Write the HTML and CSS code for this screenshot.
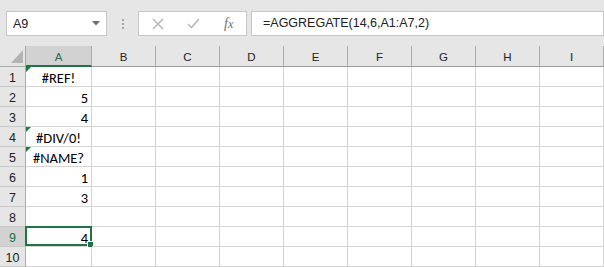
FILE: index.html
```html
<!DOCTYPE html>
<html>
<head>
<meta charset="utf-8">
<link rel="stylesheet" href="styles.css">
</head>
<body>
<div class="app">
  <div class="toolbar">
    <div class="namebox">
      <span class="name">A9</span>
      <svg class="caret" width="8" height="5" viewBox="0 0 8 5"><path d="M0 0H8L4 4.5Z" fill="#6b6b6b"/></svg>
    </div>
    <div class="grip"><i></i><i></i><i></i></div>
    <div class="buttons">
      <svg class="btn-x" width="12" height="12" viewBox="0 0 12 12"><path d="M1 1L11 11M11 1L1 11" stroke="#b9b9b9" stroke-width="1.6" fill="none"/></svg>
      <svg class="btn-ok" width="13" height="11" viewBox="0 0 13 11"><path d="M1 6L4.5 9.5L12 1" stroke="#b9b9b9" stroke-width="1.6" fill="none"/></svg>
      <span class="fx">f<span class="fx-x">x</span></span>
    </div>
    <div class="formula">=AGGREGATE(14,6,A1:A7,2)</div>
  </div>
  <div class="sheet">
    <div class="hdr corner"><svg width="12" height="13" viewBox="0 0 12 13"><path d="M12 0V13H0Z" fill="#b4b4b4"/></svg></div>
    <div class="hdr col active-col">A</div>
    <div class="hdr col">B</div>
    <div class="hdr col">C</div>
    <div class="hdr col">D</div>
    <div class="hdr col">E</div>
    <div class="hdr col">F</div>
    <div class="hdr col">G</div>
    <div class="hdr col">H</div>
    <div class="hdr col">I</div>

    <div class="hdr row">1</div><div class="cell err flag">#REF!</div><div class="cell"></div><div class="cell"></div><div class="cell"></div><div class="cell"></div><div class="cell"></div><div class="cell"></div><div class="cell"></div><div class="cell"></div>
    <div class="hdr row">2</div><div class="cell num">5</div><div class="cell"></div><div class="cell"></div><div class="cell"></div><div class="cell"></div><div class="cell"></div><div class="cell"></div><div class="cell"></div><div class="cell"></div>
    <div class="hdr row">3</div><div class="cell num">4</div><div class="cell"></div><div class="cell"></div><div class="cell"></div><div class="cell"></div><div class="cell"></div><div class="cell"></div><div class="cell"></div><div class="cell"></div>
    <div class="hdr row">4</div><div class="cell err flag">#DIV/0!</div><div class="cell"></div><div class="cell"></div><div class="cell"></div><div class="cell"></div><div class="cell"></div><div class="cell"></div><div class="cell"></div><div class="cell"></div>
    <div class="hdr row">5</div><div class="cell err flag">#NAME?</div><div class="cell"></div><div class="cell"></div><div class="cell"></div><div class="cell"></div><div class="cell"></div><div class="cell"></div><div class="cell"></div><div class="cell"></div>
    <div class="hdr row">6</div><div class="cell num">1</div><div class="cell"></div><div class="cell"></div><div class="cell"></div><div class="cell"></div><div class="cell"></div><div class="cell"></div><div class="cell"></div><div class="cell"></div>
    <div class="hdr row">7</div><div class="cell num">3</div><div class="cell"></div><div class="cell"></div><div class="cell"></div><div class="cell"></div><div class="cell"></div><div class="cell"></div><div class="cell"></div><div class="cell"></div>
    <div class="hdr row">8</div><div class="cell"></div><div class="cell"></div><div class="cell"></div><div class="cell"></div><div class="cell"></div><div class="cell"></div><div class="cell"></div><div class="cell"></div><div class="cell"></div>
    <div class="hdr row active-row">9</div><div class="cell num selected">4<span class="sel"><span class="handle"></span></span></div><div class="cell"></div><div class="cell"></div><div class="cell"></div><div class="cell"></div><div class="cell"></div><div class="cell"></div><div class="cell"></div><div class="cell"></div>
    <div class="hdr row">10</div><div class="cell"></div><div class="cell"></div><div class="cell"></div><div class="cell"></div><div class="cell"></div><div class="cell"></div><div class="cell"></div><div class="cell"></div><div class="cell"></div>
  </div>
</div>
</body>
</html>
```

FILE: styles.css
```css
html, body {
  margin: 0;
  padding: 0;
  background: #ffffff;
  overflow: hidden;
}
.app {
  width: 604px;
  height: 267px;
  overflow: hidden;
  font-family: "Carlito", "Liberation Sans", Arial, sans-serif;
  color: #000;
}
.toolbar {
  height: 46px;
  box-sizing: border-box;
  background: #e6e6e6;
  display: flex;
  align-items: flex-start;
  padding-top: 11px;
}
.namebox {
  margin-left: 6px;
  width: 101px;
  height: 25px;
  box-sizing: border-box;
  background: #fff;
  border: 1px solid #c6c6c6;
  display: flex;
  align-items: center;
  justify-content: space-between;
  padding: 0 6px 0 6px;
  font-family: "Liberation Sans", Arial, sans-serif;
  font-size: 12.5px;
  color: #222;
}
.caret {
  display: block;
}
.grip {
  width: 31px;
  height: 25px;
  display: flex;
  flex-direction: column;
  align-items: center;
  justify-content: center;
  gap: 2px;
}
.grip i {
  display: block;
  width: 2px;
  height: 2px;
  background: #a6a6a6;
}
.buttons {
  width: 109px;
  height: 25px;
  box-sizing: border-box;
  background: #fff;
  border: 1px solid #c6c6c6;
  display: flex;
  align-items: center;
  padding-left: 13px;
}
.btn-x { display: block; margin-right: 23px; }
.btn-ok { display: block; margin-right: 24px; margin-top: -1px; }
.fx {
  font-family: "Liberation Serif", "Times New Roman", serif;
  font-style: italic;
  font-size: 14px;
  color: #6e6e6e;
  line-height: 1;
}
.fx-x { font-size: 12px; }
.formula {
  margin-left: 4px;
  flex: 1;
  height: 25px;
  box-sizing: border-box;
  background: #fff;
  border: 1px solid #c6c6c6;
  padding-left: 11px;
  line-height: 23px;
  font-family: "Liberation Sans", Arial, sans-serif;
  font-size: 12.5px;
  color: #222;
  white-space: nowrap;
}
.sheet {
  display: grid;
  grid-template-columns: 26px 66px repeat(8, 64px);
  grid-template-rows: 21px repeat(10, 20px);
}
.hdr {
  box-sizing: border-box;
  background: #e6e6e6;
  font-family: "Liberation Sans", Arial, sans-serif;
  color: #222;
  text-align: center;
}
.corner {
  border-right: 1px solid #ababab;
  border-bottom: 1px solid #ababab;
  display: flex;
  align-items: flex-end;
  justify-content: flex-end;
  padding: 0 2px 3px 0;
}
.corner svg { display: block; }
.col {
  border-right: 1px solid #ababab;
  border-bottom: 1px solid #9b9b9b;
  font-size: 11.5px;
  line-height: 19px;
  padding-top: 2px;
}
.active-col {
  background: #d2d2d2;
  color: #217346;
  border-bottom: 2px solid #217346;
}
.row {
  border-right: 1px solid #ababab;
  border-bottom: 1px solid #c8c8c8;
  font-size: 12.5px;
  line-height: 19px;
  padding-top: 2px;
}
.active-row {
  background: #d2d2d2;
  color: #217346;
}
.cell {
  position: relative;
  box-sizing: border-box;
  border-right: 1px solid #d4d4d4;
  border-bottom: 1px solid #d4d4d4;
  font-size: 14.5px;
  line-height: 19px;
  padding: 2px 3px 0 3px;
  white-space: nowrap;
}
.num { text-align: right; }
.err { text-align: center; }
.flag::before {
  content: "";
  position: absolute;
  left: 0;
  top: 0;
  width: 0;
  height: 0;
  border-top: 5px solid #1e7b3a;
  border-right: 5px solid transparent;
}
.sel {
  position: absolute;
  left: -1px;
  top: -1px;
  right: -1px;
  bottom: 0;
  border: 2px solid #217346;
}
.handle {
  position: absolute;
  right: -4px;
  bottom: -4px;
  width: 5px;
  height: 5px;
  background: #217346;
  border: 1px solid #fff;
}
```
